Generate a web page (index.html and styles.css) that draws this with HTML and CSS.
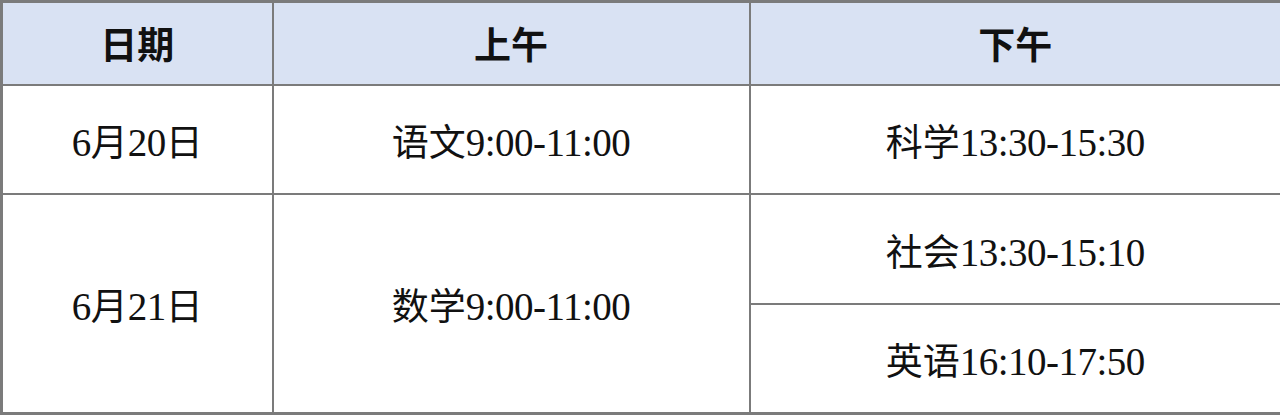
FILE: index.html
```html
<!DOCTYPE html>
<html lang="zh-CN">
<head>
<meta charset="utf-8">
<title>考试时间安排</title>
<link rel="stylesheet" href="styles.css">
</head>
<body>
<table class="schedule">
  <colgroup>
    <col class="c-date">
    <col class="c-am">
    <col class="c-pm">
  </colgroup>
  <thead>
    <tr class="head-row">
      <th>日期</th>
      <th>上午</th>
      <th>下午</th>
    </tr>
  </thead>
  <tbody>
    <tr class="row-a">
      <td><span class="lat">6</span>月<span class="lat">20</span>日</td>
      <td>语文<span class="lat">9:00-11:00</span></td>
      <td>科学<span class="lat">13:30-15:30</span></td>
    </tr>
    <tr class="row-b">
      <td rowspan="2"><span class="lat">6</span>月<span class="lat">21</span>日</td>
      <td rowspan="2">数学<span class="lat">9:00-11:00</span></td>
      <td>社会<span class="lat">13:30-15:10</span></td>
    </tr>
    <tr class="row-c">
      <td>英语<span class="lat">16:10-17:50</span></td>
    </tr>
  </tbody>
</table>
</body>
</html>
```

FILE: styles.css
```css
html, body {
  margin: 0;
  padding: 0;
  background: #ffffff;
}

.schedule {
  width: 1280px;
  height: 415px;
  border-collapse: collapse;
  table-layout: fixed;
  font-family: "Noto Sans CJK SC", sans-serif;
  color: #111111;
  border: 3px solid #7b7b7b;
}

.c-date { width: 271px; }
.c-am { width: 477px; }
.c-pm { width: 532px; }

.schedule th,
.schedule td {
  border: 2px solid #7b7b7b;
  text-align: center;
  vertical-align: middle;
  padding: 0;
  font-size: 37px;
  line-height: 1;
}

.schedule td .lat {
  font-family: "Liberation Serif", "Noto Serif", "DejaVu Serif", "Nimbus Roman", FreeSerif, Times, serif;
  font-size: 39px;
  letter-spacing: -0.5px;
}

.schedule th {
  background: #d9e2f3;
  font-weight: 700;
  font-size: 37px;
}

.head-row { height: 83px; }
.row-a { height: 109px; }
.row-b { height: 110px; }
.row-c { height: 110px; }

.schedule td {
  padding-top: 6px;
}
```
